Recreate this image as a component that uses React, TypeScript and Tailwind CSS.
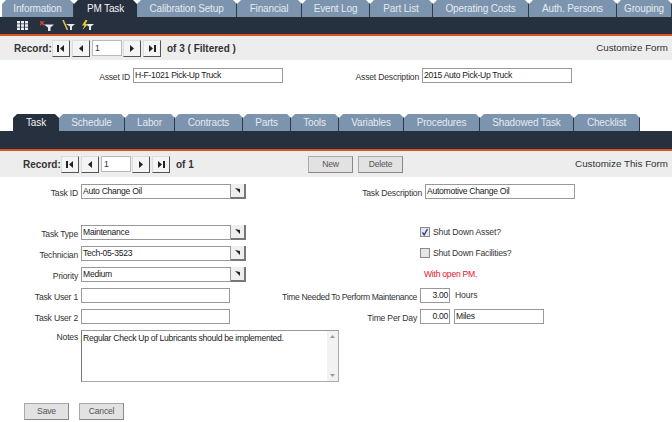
import type { ReactNode } from "react";

const FONT = "font-['Liberation_Sans',Arial,sans-serif]";

const TOP_TABS = [
  { label: "Information", w: 72 },
  { label: "PM Task", w: 63, active: true },
  { label: "Calibration Setup", w: 100 },
  { label: "Financial", w: 65 },
  { label: "Event Log", w: 68 },
  { label: "Part List", w: 63 },
  { label: "Operating Costs", w: 96 },
  { label: "Auth. Persons", w: 88 },
  { label: "Grouping", w: 55 },
];

const SUB_TABS = [
  { label: "Task", w: 46, active: true },
  { label: "Schedule", w: 66 },
  { label: "Labor", w: 50 },
  { label: "Contracts", w: 68 },
  { label: "Parts", w: 48 },
  { label: "Tools", w: 48 },
  { label: "Variables", w: 65 },
  { label: "Procedures", w: 76 },
  { label: "Shadowed Task", w: 94 },
  { label: "Checklist", w: 66 },
];

function Tab({ label, w, active }: { label: string; w: number; active?: boolean }) {
  return (
    <div
      style={{ width: w }}
      className={`flex h-full shrink-0 items-center justify-center text-[10px] tracking-[-0.15px] [clip-path:polygon(4px_0,calc(100%-4px)_0,100%_4px,100%_100%,0_100%,0_4px)] ${
        active ? "bg-[#27303f] text-[#f1f3f5]" : "border-r border-[#2f3a4a] bg-[#7c94ad] text-[#e4eaf0]"
      }`}
    >
      {label}
    </div>
  );
}

function FirstIcon() {
  return (
    <svg width="8" height="7" viewBox="0 0 8 7"><path d="M0 0h2v7H0zM7 0v7L3 3.5z" fill="#222" /></svg>
  );
}
function PrevIcon() {
  return (
    <svg width="4" height="7" viewBox="0 0 4 7"><path d="M4 0v7L0 3.5z" fill="#222" /></svg>
  );
}
function NextIcon() {
  return (
    <svg width="4" height="7" viewBox="0 0 4 7"><path d="M0 0v7l4-3.5z" fill="#222" /></svg>
  );
}
function LastIcon() {
  return (
    <svg width="8" height="7" viewBox="0 0 8 7"><path d="M6 0h2v7H6zM1 0v7l4-3.5z" fill="#222" /></svg>
  );
}

function NavBtn({ children }: { children: ReactNode }) {
  return (
    <div className="flex h-[17px] w-[18px] items-center justify-center border border-t-[#ddd] border-l-[#ddd] border-r-[#555] border-b-[#555] bg-[#f4f4f4]">
      {children}
    </div>
  );
}

function RecordBar({ of, offset }: { of: string; offset: string }) {
  return (
    <div className={`flex items-center text-[10px] font-bold text-[#333] ${offset}`}>
      <span className="w-[38px] pt-[1px]">Record:</span>
      <div className="flex items-center gap-[2px]">
        <NavBtn><FirstIcon /></NavBtn>
        <NavBtn><PrevIcon /></NavBtn>
      </div>
      <div className="ml-[2px] mr-[1px] flex h-[16px] w-[30px] items-center border border-[#bbb] bg-white pl-[2px] text-[8.6px] font-normal">1</div>
      <div className="flex items-center gap-[2px]">
        <NavBtn><NextIcon /></NavBtn>
        <NavBtn><LastIcon /></NavBtn>
      </div>
      <span className="ml-[6px] pt-[1px]">{of}</span>
    </div>
  );
}

function Field({ value = "", w = "w-[150px]", right }: { value?: string; w?: string; right?: boolean }) {
  return (
    <div className={`flex h-[15px] ${w} items-center ${right ? "justify-end pr-[1px]" : "pl-[1px]"} overflow-hidden whitespace-nowrap border border-[#999] bg-white text-[8.6px] tracking-[-0.28px] text-[#222]`}>
      {value}
    </div>
  );
}

function Lookup({ value }: { value: string }) {
  return (
    <div className="flex items-center">
      <Field value={value} />
      <div className="flex h-[15px] w-[15px] items-center justify-center border-r-2 border-b-2 border-[#777] bg-[#efefef]">
        <svg width="5" height="5" viewBox="0 0 5 5"><path d="M0 0l5 1v4z" fill="#222" /></svg>
      </div>
    </div>
  );
}

function Label({ children, w = "w-[78px]", pad = "pt-[4px]" }: { children: ReactNode; w?: string; pad?: string }) {
  return <div className={`${w} ${pad} mr-[3px] shrink-0 whitespace-nowrap text-right text-[8.6px] tracking-[-0.2px] text-[#333]`}>{children}</div>;
}

function FormRow({ left, right }: { left?: ReactNode; right?: ReactNode }) {
  return (
    <div className="flex h-[15px] items-center">
      <div className="flex w-[420px] shrink-0 items-center">{left}</div>
      <div className="flex items-center">{right}</div>
    </div>
  );
}

function GreyBtn({ children, className = "" }: { children: string; className?: string }) {
  return (
    <div className={`flex h-[17px] w-[45px] items-center justify-center border border-[#aaa] border-b-[#888] border-r-[#888] bg-[#e2e2e2] text-[8.6px] tracking-[-0.2px] text-[#555] ${className}`}>
      {children}
    </div>
  );
}

function Check({ checked }: { checked?: boolean }) {
  return (
    <div className="flex h-[10px] w-[10px] items-center justify-center border border-[#8a8a8a] bg-[#e6e6e6]">
      {checked && (
        <svg width="8" height="8" viewBox="0 0 8 8"><path d="M1.5 4.5L3.2 6.8 6.5 1" fill="none" stroke="#2b3f8f" strokeWidth="1.4" /></svg>
      )}
    </div>
  );
}

export default function App() {
  return (
    <div className={`${FONT} h-[422px] w-[672px] overflow-hidden bg-white`}>
      <div className="flex h-[17px] overflow-hidden pl-[2px]">
        {TOP_TABS.map((t) => <Tab key={t.label} {...t} />)}
      </div>
      <div className="flex h-[17px] items-center bg-[#27303f] pl-[17px]">
        <svg width="11" height="9" viewBox="0 0 11 9">
          <path d="M0 0h3v2.5H0zM4 0h3v2.5H4zM8 0h3v2.5H8zM0 3.3h3v2.5H0zM4 3.3h3v2.5H4zM8 3.3h3v2.5H8zM0 6.5h3V9H0zM4 6.5h3V9H4zM8 6.5h3V9H8z" fill="#eceef0" />
        </svg>
        <svg width="14" height="10" viewBox="0 0 14 10" className="ml-[12px]">
          <path d="M0 0l4 4M4 0L0 4" stroke="#d9442b" strokeWidth="1.3" />
          <path d="M4 3.5h10L10.500 6.500V10H8V6.500z" fill="#e6e8ea" />
        </svg>
        <svg width="13" height="11" viewBox="0 0 13 11" className="ml-[8px]">
          <path d="M4 4h9L10 6.500V10H8V6.500z" fill="#e6e8ea" />
          <path d="M1 0l4.500 10" stroke="#e3c44a" strokeWidth="1.6" />
        </svg>
        <svg width="13" height="11" viewBox="0 0 13 11" className="ml-[6px]">
          <path d="M4 4h9l-3 2.500V10H8V6.500z" fill="#e6e8ea" />
          <path d="M4.500 0L1 5.500h2.500L1.500 10 7 4H4.500L6.500 0z" fill="#e6c93a" />
        </svg>
      </div>
      <div className="h-[2px] bg-[#d9541e]" />
      <div className="flex h-[24px] items-center justify-between bg-[#ededed] pr-[4px]">
        <RecordBar of="of 3 ( Filtered )" offset="pl-[14px]" />
        <span className="pt-[1px] text-[9.8px] text-[#333]">Customize Form</span>
      </div>

      <div className="mt-[8px] flex h-[15px] items-center">
        <div className="flex w-[351px] shrink-0 items-center">
          <Label w="w-[130px]">Asset ID</Label>
          <Field value="H-F-1021 Pick-Up Truck" />
        </div>
        <Label w="w-[68px]">Asset Description</Label>
        <Field value="2015 Auto Pick-Up Truck" />
      </div>

      <div className="mt-[31px] flex h-[17px] pl-[13px]">
        {SUB_TABS.map((t) => <Tab key={t.label} {...t} />)}
      </div>
      <div className="h-[18px] bg-[#27303f]" />
      <div className="h-[2px] bg-[#d9541e]" />
      <div className="flex h-[26px] items-center bg-[#ededed] pr-[4px]">
        <RecordBar of="of 1" offset="w-[308px] pl-[23px]" />
        <GreyBtn>New</GreyBtn>
        <GreyBtn className="ml-[5px]">Delete</GreyBtn>
        <span className="ml-auto pt-[1px] text-[9.8px] text-[#333]">Customize This Form</span>
      </div>

      <div className="mt-[7px] flex flex-col">
        <div className="flex h-[15px] items-center">
          <div className="flex w-[344px] shrink-0 items-center">
            <Label>Task ID</Label>
            <Lookup value="Auto Change Oil" />
          </div>
          <Label>Task Description</Label>
          <Field value="Automotive Change Oil" />
        </div>

        <div className="mt-[26px] flex flex-col gap-[6px]">
          <FormRow
            left={<><Label>Task Type</Label><Lookup value="Maintenance" /></>}
            right={<div className="flex items-center gap-[3px] text-[8.6px] tracking-[-0.15px] text-[#333]"><Check checked />Shut Down Asset?</div>}
          />
          <FormRow
            left={<><Label>Technician</Label><Lookup value="Tech-05-3523" /></>}
            right={<div className="flex items-center gap-[3px] text-[8.6px] tracking-[-0.2px] text-[#333]"><Check />Shut Down Facilities?</div>}
          />
          <FormRow
            left={<><Label>Priority</Label><Lookup value="Medium" /></>}
            right={<span className="pl-[4px] text-[8.6px] tracking-[-0.25px] text-[#e8112d]">With open PM.</span>}
          />
          <div className="flex h-[15px] items-center">
            <div className="flex w-[230px] shrink-0 items-center">
              <Label>Task User 1</Label>
              <Field />
            </div>
            <div className="w-[187px] shrink-0 whitespace-nowrap pt-[3px] text-right text-[8.6px] tracking-[-0.36px] text-[#333]">Time Needed To Perform Maintenance</div>
            <div className="ml-[3px] flex items-center">
              <Field value="3.00" w="w-[30px]" right />
              <span className="ml-[5px] text-[8.6px] tracking-[-0.1px] text-[#333]">Hours</span>
            </div>
          </div>
          <div className="flex h-[15px] items-center">
            <div className="flex w-[230px] shrink-0 items-center">
              <Label>Task User 2</Label>
              <Field />
            </div>
            <div className="w-[187px] shrink-0 pt-[3px] text-right text-[8.6px] tracking-[-0.2px] text-[#333]">Time Per Day</div>
            <div className="ml-[3px] flex items-center gap-[4px]">
              <Field value="0.00" w="w-[30px]" right />
              <Field value="Miles" w="w-[90px]" />
            </div>
          </div>
          <div className="flex items-start">
            <Label pad="pt-[1px]">Notes</Label>
            <div className="flex h-[52px] w-[258px] justify-between border border-[#aaa] border-t-[#999] border-l-[#777] bg-white pl-[1px] text-[8.6px] tracking-[-0.28px] text-[#222]">
              <span className="pt-[1px]">Regular Check Up of Lubricants should be implemented.</span>
              <div className="flex w-[11px] flex-col items-center justify-between bg-[#f2f2f2] py-[4px]">
                <svg width="5" height="3" viewBox="0 0 5 3"><path d="M2.500 0L5 3H0z" fill="#999" /></svg>
                <svg width="5" height="3" viewBox="0 0 5 3"><path d="M0 0h5L2.500 3z" fill="#999" /></svg>
              </div>
            </div>
          </div>
        </div>

        <div className="mt-[21px] flex gap-[10px] pl-[24px]">
          <GreyBtn>Save</GreyBtn>
          <GreyBtn>Cancel</GreyBtn>
        </div>
      </div>
    </div>
  );
}
